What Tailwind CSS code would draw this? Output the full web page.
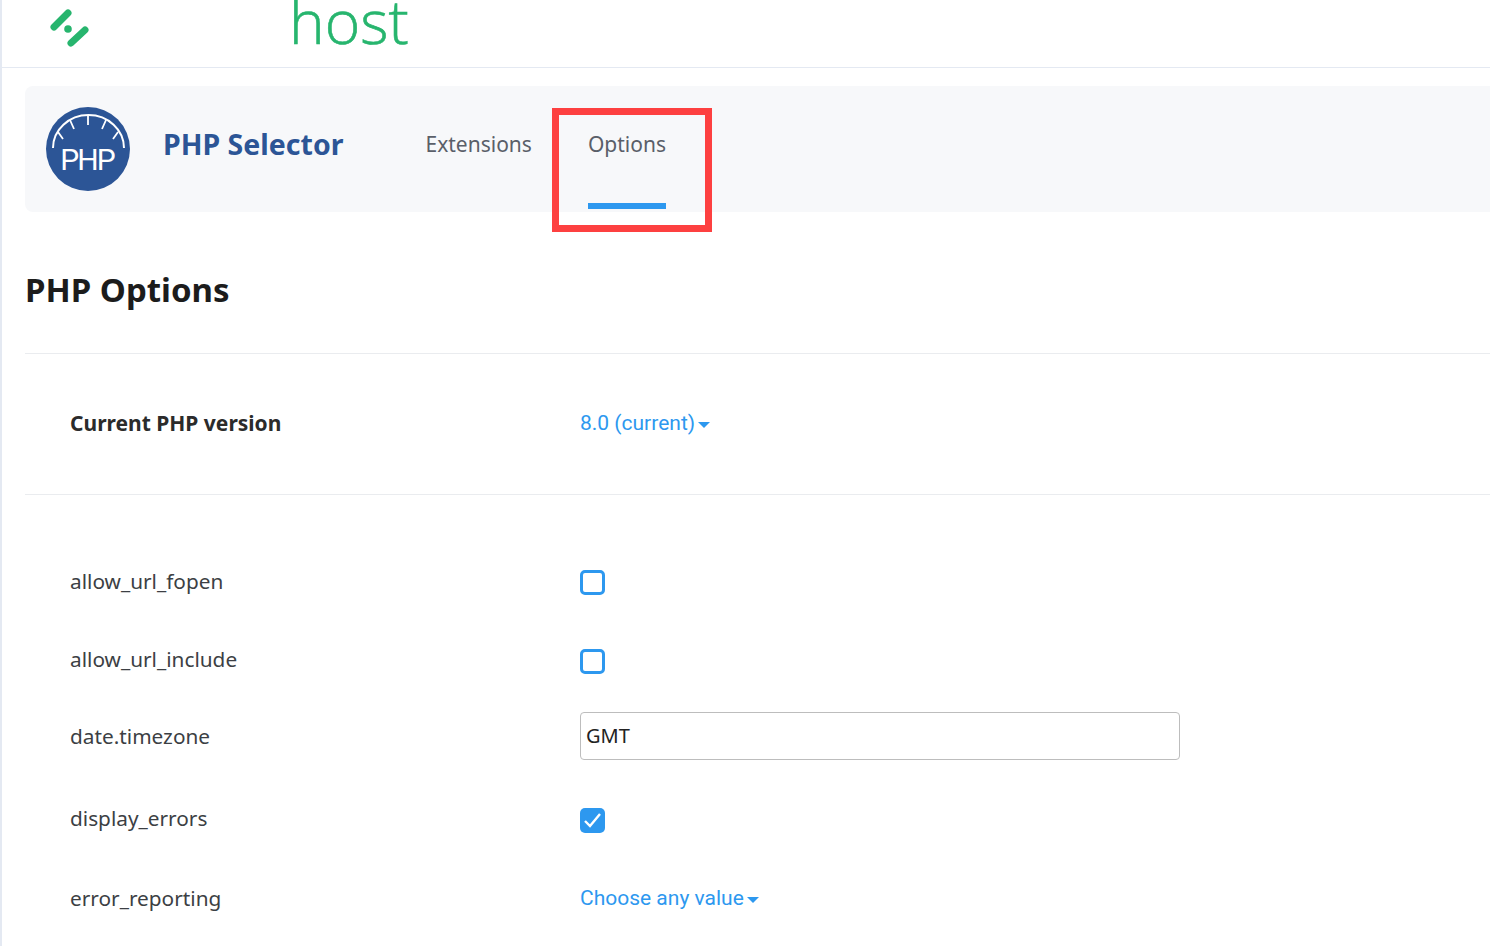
<!DOCTYPE html>
<html lang="en">
<head>
<meta charset="UTF-8">
<title>PHP Selector</title>
<script src="https://cdn.jsdelivr.net/npm/@tailwindcss/browser@4"></script>
</head>
<body class="bg-white font-['Noto_Sans',sans-serif] overflow-hidden">
<div class="relative h-[946px] w-[1490px] overflow-hidden border-l-2 border-[#e4e9f2]">

  <!-- Top bar -->
  <header class="flex h-[68px] border-b border-[#e4e9f2] overflow-hidden">
    <svg class="ml-[46px] mt-[6px] w-[44px] h-[44px] shrink-0" viewBox="0 0 44 44">
      <path d="M6 21 L20 7" stroke="#27b56e" stroke-width="7" stroke-linecap="round"/>
      <circle cx="20" cy="23" r="3.8" fill="#27b56e"/>
      <path d="M23 37 L37 24" stroke="#27b56e" stroke-width="7" stroke-linecap="round"/>
    </svg>
    <span class="ml-[197px] mt-[-21px] text-[60.5px] leading-[84px] font-light text-[#27b56e] font-['Open_Sans',sans-serif] [-webkit-text-stroke:0.6px_#27b56e]">host</span>
  </header>

  <main class="pl-[23px]">
    <!-- Selector tabs -->
    <div class="mt-[18px] flex h-[126px] items-start rounded-l-lg bg-[#f7f8fa]">
      <svg class="ml-[21px] mt-[21px] w-[84px] h-[84px] shrink-0" viewBox="0 0 84 84">
        <circle cx="42" cy="42" r="42" fill="#2c5596"/>
        <path d="M7 41 A35.5 33 0 0 1 78 41" fill="none" stroke="#fff" stroke-width="2"/>
        <path d="M42 8 V18 M24 13 L28 22 M60 13 L56 22 M12 25 L17 32 M72 25 L67 32" stroke="#fff" stroke-width="1.8"/>
        <text x="41" y="63" text-anchor="middle" fill="#fff" font-family="Roboto" font-size="30" letter-spacing="-2">PHP</text>
      </svg>
      <h1 class="ml-[33px] mt-[38px] text-[28.5px] leading-[40px] font-bold text-[#2c5596]">PHP Selector</h1>
      <nav class="ml-[82px] flex text-[#5a5f69] text-[21px] leading-[30px]">
        <a class="mt-[43px]">Extensions</a>
        <a class="relative ml-[56px] mt-[43px] h-[80px]">Options<span class="absolute left-0 right-0 top-[74px] h-[6px] bg-[#2d98ef]"></span></a>
      </nav>
    </div>

    <h2 class="mt-[56px] text-[33px] leading-[44px] font-bold text-[#1c1c1c]">PHP Options</h2>

    <div class="mt-[41px] h-[142px] border-y border-[#eaecef] flex items-center pl-[45px]">
      <span class="w-[510px] text-[21px] font-bold text-[#2b2b2b]">Current PHP version</span>
      <span class="flex items-center text-[21px] text-[#2d98ef] font-['Roboto',sans-serif]">8.0 (current)<i class="ml-[3px] mt-[2px] border-x-[6px] border-t-[6px] border-x-transparent border-t-[#2d98ef]"></i></span>
    </div>

    <!-- Option rows -->
    <div class="pl-[45px] pt-[47px] text-[20.8px] text-[#3c3f44]">
      <div class="flex items-center h-[80px]">
        <span class="w-[510px]">allow_url_fopen</span>
        <span class="h-[25px] w-[25px] rounded-[5px] border-[3px] border-[#2d98ef]"></span>
      </div>
      <div class="flex items-center h-[78px]">
        <span class="w-[510px] pb-[2px]">allow_url_include</span>
        <span class="h-[25px] w-[25px] rounded-[5px] border-[3px] border-[#2d98ef]"></span>
      </div>
      <div class="flex items-center h-[72px]">
        <span class="w-[510px] pt-[2px]">date.timezone</span>
        <span class="flex h-[48px] w-[600px] items-center rounded border border-[#bdbdbd] pl-[5px] text-[20px] text-[#222]">GMT</span>
      </div>
      <div class="flex items-center h-[96px]">
        <span class="w-[510px] pb-[2px]">display_errors</span>
        <span class="flex h-[25px] w-[25px] items-center justify-center rounded-[5px] bg-[#2d98ef]">
          <svg class="w-[21px] h-[21px]" viewBox="0 0 21 21"><path d="M3 11 L8 16 L18 4" fill="none" stroke="#fff" stroke-width="2.4"/></svg>
        </span>
      </div>
      <div class="flex items-center h-[60px]">
        <span class="w-[510px] pt-[2px]">error_reporting</span>
        <span class="flex items-center pt-[2px] text-[21px] text-[#2d98ef] font-['Roboto',sans-serif]">Choose any value<i class="ml-[3px] mt-[2px] border-x-[6px] border-t-[6px] border-x-transparent border-t-[#2d98ef]"></i></span>
      </div>
    </div>
  </main>

  <!-- Red annotation round the Options tab -->
  <div class="absolute left-[550px] top-[108px] h-[124px] w-[160px] border-[7px] border-[#fd4040]"></div>
</div>
</body>
</html>
